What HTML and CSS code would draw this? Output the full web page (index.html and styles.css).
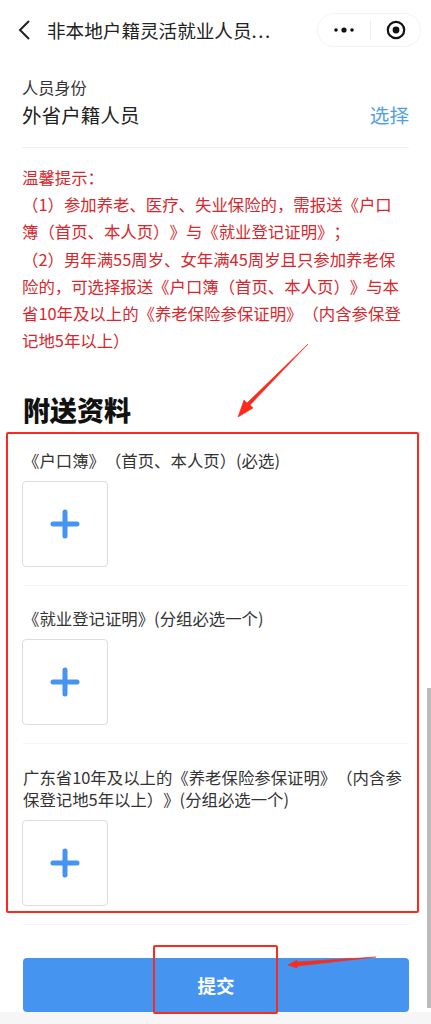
FILE: index.html
```html
<!DOCTYPE html>
<html lang="zh-CN">
<head>
    <meta charset="UTF-8">
    <title>非本地户籍灵活就业人员</title>
    <link rel="stylesheet" href="styles.css">
</head>
<body>
<div class="page">
    <div class="nav">
        <svg class="back" width="14" height="22" viewBox="0 0 14 22"><path d="M12 2 L3 11 L12 20" fill="none" stroke="#222" stroke-width="2"/></svg>
        <div class="nav-title">非本地户籍灵活就业人员<span class="dots">...</span></div>
        <div class="capsule">
            <svg width="22" height="6" viewBox="0 0 22 6"><circle cx="3" cy="3" r="1.8" fill="#111"/><circle cx="11" cy="3" r="2.6" fill="#111"/><circle cx="19" cy="3" r="1.8" fill="#111"/></svg>
            <span class="capsule-line"></span>
            <svg width="20" height="20" viewBox="0 0 20 20"><circle cx="10" cy="10" r="8.2" fill="none" stroke="#111" stroke-width="2.2"/><circle cx="10" cy="10" r="3.4" fill="#111"/></svg>
        </div>
    </div>

    <div class="content">
        <div class="field">
            <div class="field-label">人员身份</div>
            <div class="field-row">
                <span class="field-value">外省户籍人员</span>
                <span class="field-link">选择</span>
            </div>
        </div>

        <div class="tips">
            温馨提示：<br>
            （1）参加养老、医疗、失业保险的，需报送《户口簿（首页、本人页）》与《就业登记证明》；<br>
            （2）男年满55周岁、女年满45周岁且只参加养老保险的，可选择报送《户口簿（首页、本人页）》与本省10年及以上的《养老保险参保证明》（内含参保登记地5年以上）
        </div>

        <h2 class="title">附送资料</h2>

        <div class="doc doc-first">
            <div class="doc-label">《户口簿》（首页、本人页）(必选)</div>
            <div class="upload"><svg width="30" height="30" viewBox="0 0 30 30"><path d="M15 3 V27 M3 15 H27" stroke="#4494f0" stroke-width="5" stroke-linecap="round"/></svg></div>
        </div>
        <div class="doc">
            <div class="doc-label">《就业登记证明》(分组必选一个)</div>
            <div class="upload"><svg width="30" height="30" viewBox="0 0 30 30"><path d="M15 3 V27 M3 15 H27" stroke="#4494f0" stroke-width="5" stroke-linecap="round"/></svg></div>
        </div>
        <div class="doc doc-last">
            <div class="doc-label">广东省10年及以上的《养老保险参保证明》（内含参保登记地5年以上）》(分组必选一个)</div>
            <div class="upload"><svg width="30" height="30" viewBox="0 0 30 30"><path d="M15 3 V27 M3 15 H27" stroke="#4494f0" stroke-width="5" stroke-linecap="round"/></svg></div>
        </div>

        <button class="submit">提交</button>
    </div>
    <div class="bottom-bar"></div>

    <!-- 红色标注 -->
    <div class="mark mark-docs"></div>
    <div class="mark mark-btn"></div>
    <svg class="arrows" width="431" height="1024" viewBox="0 0 431 1024">
        <path d="M308 344 L250 405 L253 408 L238 417 L244 400 L247 403 Z" fill="#fb2a1c" stroke="#fb2a1c" stroke-width="0.6"/>
        <path d="M376 957 L297 962 L297 960 L288 965 L297 968 L297 966 Z" fill="#fb2a1c" stroke="#fb2a1c" stroke-width="0.6"/>
    </svg>
    <div class="scrollbar"></div>
</div>
</body>
</html>
```

FILE: styles.css
```css
html, body {
    margin: 0;
    padding: 0;
}
body {
    font-family: "Noto Sans CJK SC", "Liberation Sans", sans-serif;
    background-color: #fff;
    color: #222;
    text-spacing-trim: space-all;
}
.page {
    position: relative;
    width: 431px;
    height: 1024px;
    overflow: hidden;
}
.nav {
    display: flex;
    align-items: center;
    height: 34px;
    padding: 13px 10px 0 17px;
}
.back {
    margin-right: 16px;
}
.nav-title {
    flex: 1;
    font-size: 18.6px;
    line-height: 34px;
    white-space: nowrap;
    color: #222;
}
.dots {
    letter-spacing: 1.5px;
}
.capsule {
    display: flex;
    align-items: center;
    justify-content: space-between;
    box-sizing: border-box;
    width: 104px;
    height: 34px;
    padding: 0 14px 0 15px;
    border: 1px solid #f3f3f3;
    border-radius: 17px;
}
.capsule-line {
    width: 1px;
    height: 20px;
    background-color: #eee;
}
.content {
    padding: 0 22px 0 23px;
}
.field {
    margin-top: 28px;
    margin-left: -1px;
    padding-bottom: 16px;
    border-bottom: 1px solid #f1f1f1;
}
.field-label {
    font-size: 16.2px;
    line-height: 24px;
    color: #333;
}
.field-row {
    display: flex;
    justify-content: space-between;
    font-size: 19.6px;
    line-height: 32px;
}
.field-link {
    color: #4f9fe6;
}
.tips {
    margin: 16px 4px 0 -1px;
    font-size: 16.4px;
    line-height: 27.2px;
    color: #d8262c;
}
.title {
    margin: 36px 0 0;
    font-size: 27px;
    line-height: 40px;
    font-weight: 900;
    color: #111;
}
.doc {
    padding: 21px 0 18px;
    border-bottom: 1px solid #f4f4f4;
}
.doc-first {
    padding-top: 19px;
}
.doc-last {
    padding-top: 22px;
}
.doc-label {
    font-size: 16.4px;
    line-height: 22px;
    margin-bottom: 10px;
    color: #333;
}
.upload {
    display: flex;
    align-items: center;
    justify-content: center;
    box-sizing: border-box;
    width: 86px;
    height: 86px;
    margin-left: -1px;
    border: 1px solid #ddd;
    border-radius: 4px;
}
.submit {
    display: block;
    width: 100%;
    height: 54px;
    margin-top: 33px;
    background-color: #4494f0;
    color: #fff;
    border: none;
    border-radius: 4px;
    font-family: inherit;
    font-size: 18.5px;
    font-weight: 700;
}
.bottom-bar {
    position: absolute;
    left: 0;
    right: 0;
    bottom: 0;
    height: 12px;
    background-color: #f6f6f6;
}
.mark {
    position: absolute;
    box-sizing: border-box;
    border: 2px solid #fb2a1c;
    border-radius: 2px;
}
.mark-docs {
    left: 6px;
    top: 432px;
    width: 413px;
    height: 481px;
}
.mark-btn {
    left: 153px;
    top: 945px;
    width: 125px;
    height: 69px;
}
.arrows {
    position: absolute;
    left: 0;
    top: 0;
}
.scrollbar {
    position: absolute;
    right: 0;
    top: 688px;
    width: 4px;
    height: 320px;
    background-color: #bbb;
}
```
